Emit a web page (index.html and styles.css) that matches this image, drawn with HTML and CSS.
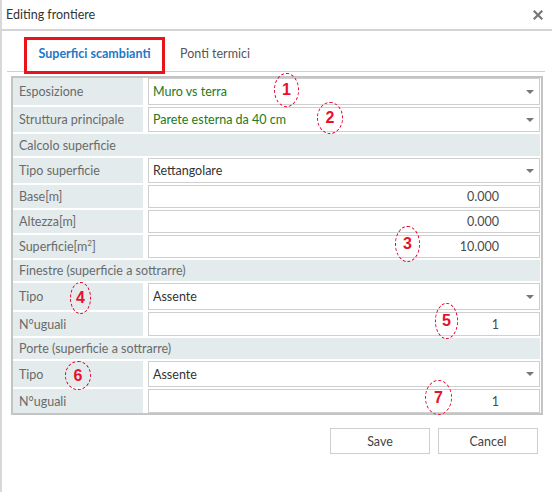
FILE: index.html
```html
<!DOCTYPE html>
<html lang="it">
<head>
    <meta charset="UTF-8">
    <title>Editing frontiere</title>
    <link rel="stylesheet" href="styles.css">
</head>
<body>
    <div class="dialog">
        <div class="titlebar">
            <span class="title">Editing frontiere</span>
            <span class="close">
                <svg width="10" height="10" viewBox="0 0 10 10"><path d="M1.5 1.5 L8.5 8.5 M8.5 1.5 L1.5 8.5" stroke="#777" stroke-width="2.2" stroke-linecap="square"/></svg>
            </span>
        </div>

        <div class="tabs">
            <div class="tab active">Superfici scambianti</div>
            <div class="tab">Ponti termici</div>
        </div>

        <div class="form">
            <div class="label">Esposizione</div>
            <div class="field select green"><span>Muro vs terra</span><i class="caret"></i></div>

            <div class="label">Struttura principale</div>
            <div class="field select green"><span>Parete esterna da 40 cm</span><i class="caret"></i></div>

            <div class="section">Calcolo superficie</div>

            <div class="label">Tipo superficie</div>
            <div class="field select"><span>Rettangolare</span><i class="caret"></i></div>

            <div class="label">Base[m]</div>
            <div class="field number">0.000</div>

            <div class="label">Altezza[m]</div>
            <div class="field number">0.000</div>

            <div class="label">Superficie[m<sup>2</sup>]</div>
            <div class="field number">10.000</div>

            <div class="section">Finestre (superficie a sottrarre)</div>

            <div class="label">Tipo</div>
            <div class="field select"><span>Assente</span><i class="caret"></i></div>

            <div class="label">N°uguali</div>
            <div class="field number">1</div>

            <div class="section">Porte (superficie a sottrarre)</div>

            <div class="label">Tipo</div>
            <div class="field select"><span>Assente</span><i class="caret"></i></div>

            <div class="label">N°uguali</div>
            <div class="field number">1</div>
        </div>

        <div class="actions">
            <button>Save</button>
            <button>Cancel</button>
        </div>

        <!-- annotations drawn over the form -->
        <div class="mark-tab"></div>
        <div class="mark m1">1</div>
        <div class="mark m2">2</div>
        <div class="mark m3">3</div>
        <div class="mark m4">4</div>
        <div class="mark m5">5</div>
        <div class="mark m6">6</div>
        <div class="mark m7">7</div>
    </div>
</body>
</html>
```

FILE: styles.css
```css
body {
    margin: 0;
    background: #fff;
    font-family: 'Lato', 'Liberation Sans', sans-serif;
    font-size: 12.5px;
    color: #444;
}

.dialog {
    position: relative;
    height: 492px;
    border-left: 2px solid #d8d8d8;
}

.titlebar {
    display: flex;
    align-items: center;
    justify-content: space-between;
    height: 29px;
    padding: 0 9px 0 4px;
    border-bottom: 2px solid #d4d4d4;
}

.title {
    color: #333;
    font-size: 12.5px;
}

.close svg {
    display: block;
}

.tabs {
    display: flex;
    margin: 6px 7px 0 5px;
    height: 34px;
    border-bottom: 1px solid #cfcfcf;
}

.tab {
    line-height: 34px;
    padding: 0 15px;
    color: #555;
    white-space: nowrap;
}

.tab.active {
    width: 141px;
    box-sizing: border-box;
    margin-left: 17px;
    padding: 0;
    text-align: center;
    color: #1d78c8;
    font-weight: bold;
}

.form {
    display: grid;
    grid-template-columns: 130px 1fr;
    grid-template-rows: 27px 25px 22px 25px 23px 23px 23px 21px 27px 24px 21px 26px 24px;
    row-gap: 2px;
    column-gap: 5px;
    margin: 4px 9px 0 9px;
    padding-right: 1px;
    border: 2px solid #c4c4c4;
}

.label, .section {
    display: flex;
    align-items: center;
    padding-left: 6px;
    background: #e3ebec;
    color: #6a6a6a;
}

.label sup {
    font-size: 8px;
    align-self: flex-start;
    margin-top: 3px;
}

.section {
    grid-column: 1 / 3;
}

.field {
    display: flex;
    align-items: center;
    padding: 0 5px 0 4px;
    background: #fff;
    border: 1px solid #cfcfcf;
    color: #333;
}

.field.green {
    color: #217a21;
}

.field.number {
    justify-content: flex-end;
    padding-right: 40px;
    color: #4a4a4a;
}

.caret {
    margin-left: auto;
    width: 0;
    height: 0;
    border-left: 4px solid transparent;
    border-right: 4px solid transparent;
    border-top: 4px solid #777;
}

.actions {
    display: flex;
    justify-content: flex-end;
    gap: 8px;
    margin: 13px 14px 0 0;
}

button {
    width: 100px;
    height: 26px;
    background: #fff;
    border: 1px solid #cfcfcf;
    font-family: inherit;
    font-size: 12.5px;
    color: #444;
}

.mark-tab {
    position: absolute;
    left: 22px;
    top: 37px;
    width: 141px;
    height: 37px;
    box-sizing: border-box;
    border: 3px solid #e8141c;
}

.mark {
    position: absolute;
    display: flex;
    align-items: center;
    justify-content: center;
    box-sizing: border-box;
    border: 1px dashed #e4002b;
    border-radius: 50%;
    color: #e8102a;
    font-weight: bold;
    font-size: 16px;
    font-family: 'Liberation Sans', sans-serif;
}

.m1 { left: 272px; top: 73px; width: 25px; height: 34px; }
.m2 { left: 315px; top: 102px; width: 26px; height: 32px; }
.m3 { left: 393px; top: 226px; width: 25px; height: 36px; }
.m4 { left: 68px; top: 282px; width: 21px; height: 32px; }
.m5 { left: 433px; top: 303px; width: 23px; height: 36px; }
.m6 { left: 63px; top: 361px; width: 26px; height: 29px; }
.m7 { left: 423px; top: 380px; width: 27px; height: 35px; }
```
